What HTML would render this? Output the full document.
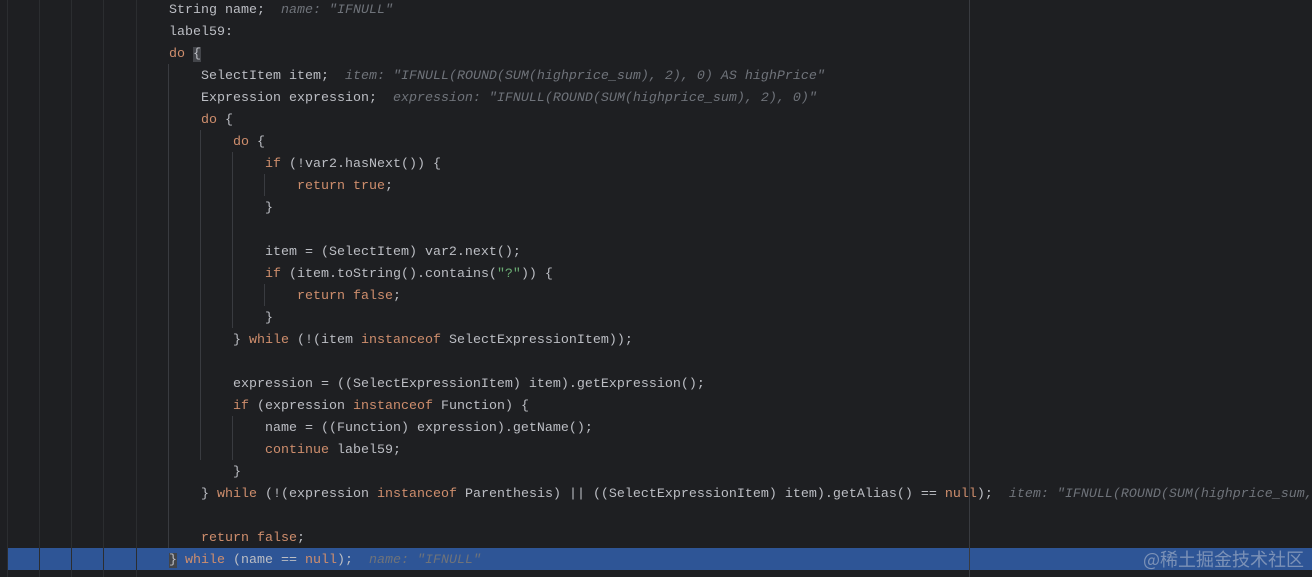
<!DOCTYPE html>
<html><head><meta charset="utf-8"><style>
html,body{margin:0;padding:0;}
body{width:1312px;height:577px;background:#1e1f22;overflow:hidden;position:relative;font-family:"Liberation Mono",monospace;}
.g{position:absolute;top:0;bottom:0;width:1px;background:#2b2d30;}
.ig{position:absolute;width:1px;background:#393b40;}
.hl{position:absolute;left:7px;right:0;top:548px;height:22px;background:#2e5596;}
pre{position:absolute;left:169px;top:0px;width:1143px;overflow:hidden;margin:0;font-family:"Liberation Mono",monospace;font-size:13.33px;line-height:22px;color:#bcbec4;white-space:pre;}
.k{color:#cf8e6d}.h{color:#6f737a;font-style:italic}.s{color:#6aab73}
.b{background:#43454a}
.wm{position:absolute;right:8px;top:546px;font-family:"Noto Sans CJK SC",sans-serif;font-size:18px;color:rgba(200,205,215,0.5);}
</style></head><body>
<div class="hl"></div>
<div class="g" style="left:7px"></div>
<div class="g" style="left:39px"></div>
<div class="g" style="left:71px"></div>
<div class="g" style="left:103px"></div>
<div class="g" style="left:136px"></div>
<div class="g" style="left:969px;background:#393b40"></div>
<div class="ig" style="left:168px;top:64px;height:484px"></div>
<div class="ig" style="left:200px;top:130px;height:330px"></div>
<div class="ig" style="left:232px;top:152px;height:176px"></div>
<div class="ig" style="left:264px;top:174px;height:22px"></div>
<div class="ig" style="left:264px;top:284px;height:22px"></div>
<div class="ig" style="left:232px;top:416px;height:44px"></div>
<pre>String name;  <span class="h">name: "IFNULL"</span>
label59:
<span class="k">do</span> <span class="b">{</span>
    SelectItem item;  <span class="h">item: "IFNULL(ROUND(SUM(highprice_sum), 2), 0) AS highPrice"</span>
    Expression expression;  <span class="h">expression: "IFNULL(ROUND(SUM(highprice_sum), 2), 0)"</span>
    <span class="k">do</span> {
        <span class="k">do</span> {
            <span class="k">if</span> (!var2.hasNext()) {
                <span class="k">return true</span>;
            }

            item = (SelectItem) var2.next();
            <span class="k">if</span> (item.toString().contains(<span class="s">"?"</span>)) {
                <span class="k">return false</span>;
            }
        } <span class="k">while</span> (!(item <span class="k">instanceof</span> SelectExpressionItem));

        expression = ((SelectExpressionItem) item).getExpression();
        <span class="k">if</span> (expression <span class="k">instanceof</span> Function) {
            name = ((Function) expression).getName();
            <span class="k">continue</span> label59;
        }
    } <span class="k">while</span> (!(expression <span class="k">instanceof</span> Parenthesis) || ((SelectExpressionItem) item).getAlias() == <span class="k">null</span>);  <span class="h">item: "IFNULL(ROUND(SUM(highprice_sum,</span>

    <span class="k">return false</span>;
<span class="b">}</span> <span class="k">while</span> (name == <span class="k">null</span>);  <span class="h">name: "IFNULL"</span></pre>
<div class="wm">@稀土掘金技术社区</div>
</body></html>
